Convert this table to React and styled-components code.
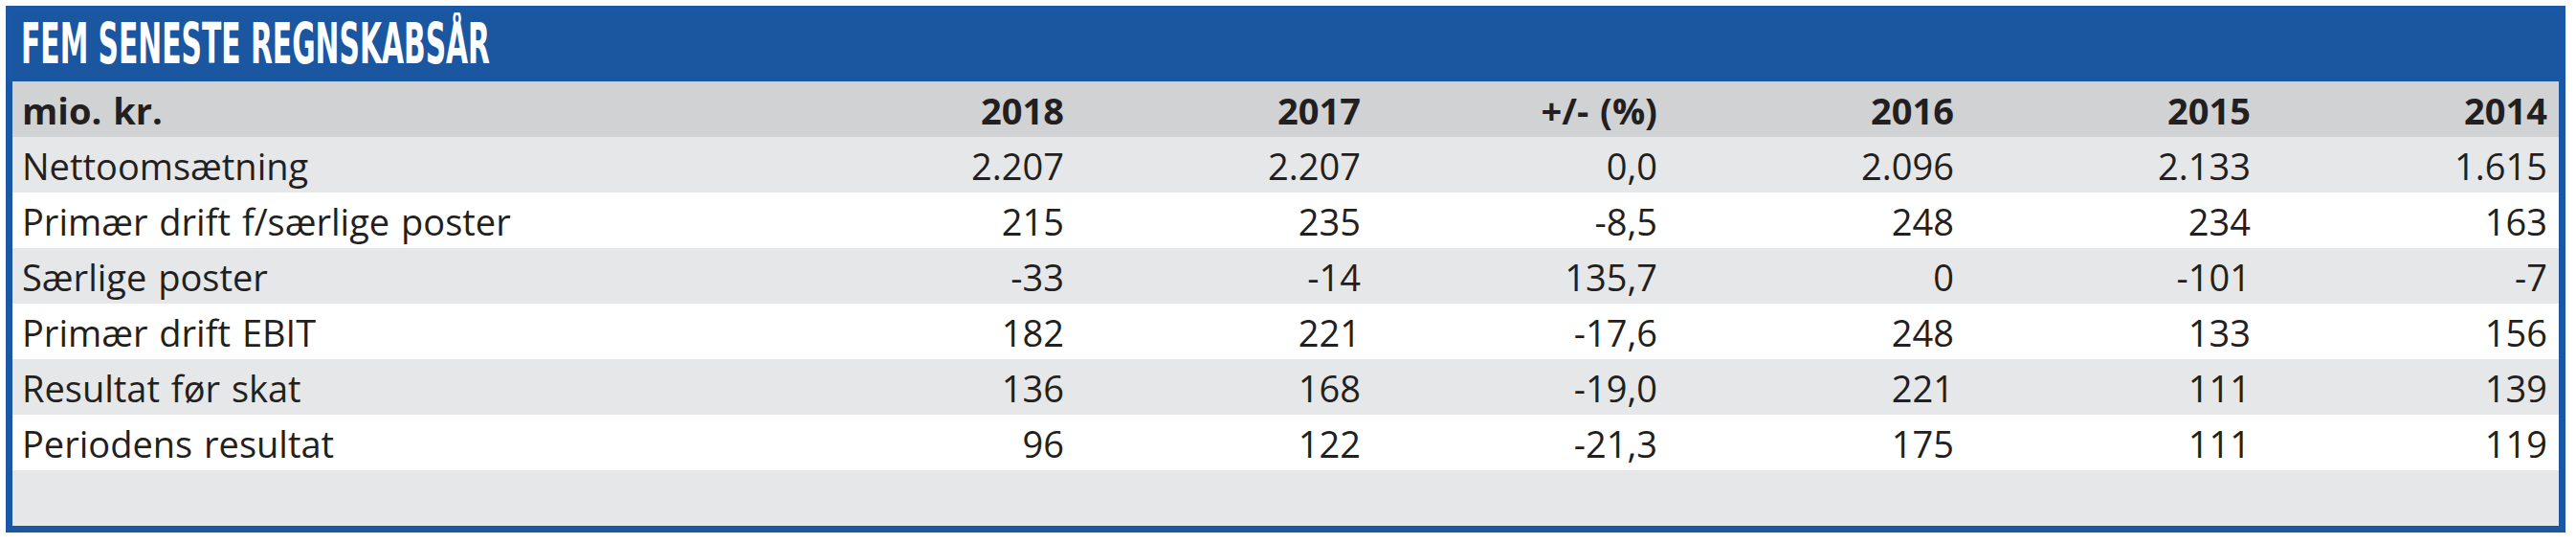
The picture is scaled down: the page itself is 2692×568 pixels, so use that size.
import React from 'react'
import styled, { createGlobalStyle } from 'styled-components'

const GlobalStyle = createGlobalStyle`
  html, body {
    margin: 0;
    padding: 0;
    background: #ffffff;
  }
  body {
    font-family: "Open Sans", "Liberation Sans", sans-serif;
  }
`

const columns = ['2018', '2017', '+/- (%)', '2016', '2015', '2014']

const rows = [
  { label: 'Nettoomsætning', values: ['2.207', '2.207', '0,0', '2.096', '2.133', '1.615'] },
  { label: 'Primær drift f/særlige poster', values: ['215', '235', '-8,5', '248', '234', '163'] },
  { label: 'Særlige poster', values: ['-33', '-14', '135,7', '0', '-101', '-7'] },
  { label: 'Primær drift EBIT', values: ['182', '221', '-17,6', '248', '133', '156'] },
  { label: 'Resultat før skat', values: ['136', '168', '-19,0', '221', '111', '139'] },
  { label: 'Periodens resultat', values: ['96', '122', '-21,3', '175', '111', '119'] },
]

function App() {
  return (
    <Page>
      <GlobalStyle />
      <Frame>
        <TitleBar>
          <Title>Fem seneste regnskabsår</Title>
        </TitleBar>
        <HeadRow>
          <Label>mio. kr.</Label>
          {columns.map((c) => (
            <Cell key={c}>{c}</Cell>
          ))}
        </HeadRow>
        {rows.map((r, i) => (
          <Row key={r.label} $shade={i % 2 === 0}>
            <Label>{r.label}</Label>
            {r.values.map((v, j) => (
              <Cell key={j}>{v}</Cell>
            ))}
          </Row>
        ))}
        <Row $shade />
      </Frame>
    </Page>
  )
}

export default App

const Page = styled.div`
  padding: 6px 11px 0 6px;
`

const Frame = styled.div`
  border: 7px solid #1a58a6;
  background: #ffffff;
`

const TitleBar = styled.div`
  height: 72px;
  box-sizing: border-box;
  padding: 0 0 6px 9px;
  background: #1b56a0;
  display: flex;
  align-items: center;
  overflow: hidden;
`

const Title = styled.h1`
  margin: 0;
  color: #ffffff;
  font-family: "Liberation Sans Narrow", "DejaVu Sans Condensed", "Liberation Sans", sans-serif;
  font-weight: 700;
  font-size: 58px;
  line-height: 1;
  text-transform: uppercase;
  white-space: nowrap;
  transform: scaleX(0.57);
  transform-origin: left center;
`

const Row = styled.div`
  display: grid;
  grid-template-columns: 1fr repeat(6, 310px);
  align-items: center;
  height: 58px;
  padding: 2px 12px 0 10px;
  box-sizing: border-box;
  background: ${(p) => (p.$shade ? '#e6e7e8' : '#ffffff')};
  color: #231f20;
  font-size: 38px;
  line-height: 1;
  word-spacing: 2px;
`

const HeadRow = styled(Row)`
  background: #d1d2d4;
  font-weight: 700;
`

const Label = styled.div`
  white-space: nowrap;
`

const Cell = styled.div`
  text-align: right;
  white-space: nowrap;
`
